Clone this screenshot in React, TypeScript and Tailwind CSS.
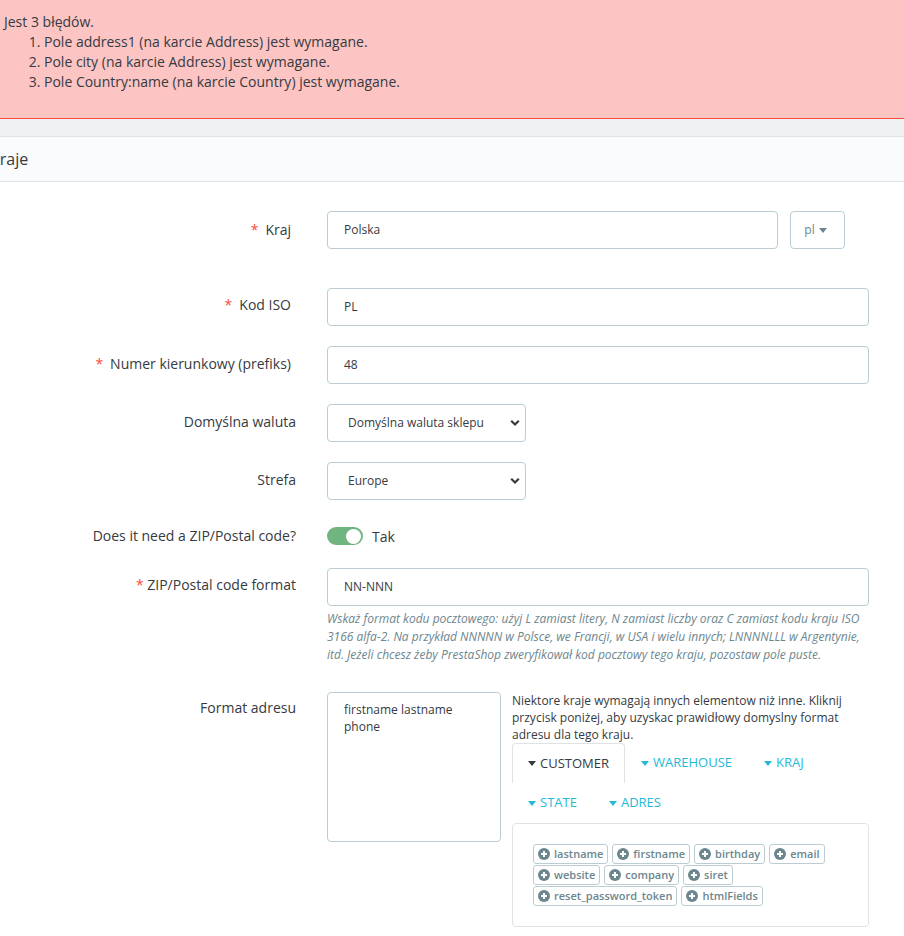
import React from 'react'

const Star = () => <span className="mr-[7px] text-[#f54c3e]">*</span>

type RowProps = {
	label: React.ReactNode
	className?: string
	labelClass?: string
	children: React.ReactNode
}

function Row({ label, className = '', labelClass = 'pt-[9px]', children }: RowProps) {
	return (
		<div className={`flex ${className}`}>
			<div className={`w-[296px] shrink-0 text-right text-[14px] leading-[20px] ${labelClass}`}>{label}</div>
			<div className="ml-[31px] w-[542px]">{children}</div>
		</div>
	)
}

const Caret = ({ color }: { color: string }) => (
	<svg width="8" height="5" viewBox="0 0 8 5" className="mr-[4px] inline-block">
		<path d="M0 0h8L4 5z" fill={color} />
	</svg>
)

const Chevron = () => (
	<svg width="10" height="7" viewBox="0 0 10 7" className="pointer-events-none absolute right-[5px] top-1/2 -translate-y-1/2">
		<path d="M1.2 1.2L5 5l3.8-3.8" stroke="#363a41" strokeWidth="2.2" fill="none" />
	</svg>
)

function Select({ value }: { value: string }) {
	return (
		<div className="relative h-[38px] w-[199px] rounded-[4px] border border-[#bbcdd2] bg-white">
			<div className="flex h-full items-center pl-[20px] text-[12px]">{value}</div>
			<Chevron />
		</div>
	)
}

function Tag({ name }: { name: string }) {
	return (
		<span className="flex h-[20px] items-center gap-[4px] rounded-[3px] border border-[#bbcdd2] bg-white pl-[4px] pr-[4px] text-[11px] font-semibold text-[#6c868e]">
			<svg width="12" height="12" viewBox="0 0 12 12">
				<circle cx="6" cy="6" r="6" fill="#6c868e" />
				<path d="M6 3v6M3 6h6" stroke="#fff" strokeWidth="2" />
			</svg>
			{name}
		</span>
	)
}

const tags = ['lastname', 'firstname', 'birthday', 'email', 'website', 'company', 'siret', 'reset_password_token', 'htmlFields']

export default function App() {
	const input = 'h-[38px] rounded-[4px] border border-[#bbcdd2] bg-white flex items-center pl-[16px] text-[12px]'

	return (
		<div className="min-h-screen overflow-hidden bg-white font-['Open_Sans',sans-serif] text-[#363a41]">
			{/* error alert */}
			<div className="h-[119px] border-b border-[#f54c3e] bg-[#fcc5c3] pl-[4px] pt-[12px] text-[14px] leading-[20px]">
				<div>Jest 3 błędów.</div>
				<ol className="list-decimal pl-[40px]">
					<li>Pole address1 (na karcie Address) jest wymagane.</li>
					<li>Pole city (na karcie Address) jest wymagane.</li>
					<li>Pole Country:name (na karcie Country) jest wymagane.</li>
				</ol>
			</div>
			<div className="h-[17px] bg-[#eff1f2]" />
			<div className="flex h-[46px] items-center border-y border-[#dfe3e6] bg-[#fafbfc] text-[16px]">
				<span className="-ml-[10px]">Kraje</span>
			</div>

			<div className="pt-[29px] pb-[20px]">
				<Row label={<span className="pr-[5px]"><Star />Kraj</span>}>
					<div className="flex gap-[12px]">
						<div className={`${input} w-[451px]`}>Polska</div>
						<div className="flex h-[38px] w-[55px] items-center justify-center rounded-[4px] border border-[#bbcdd2] text-[12px] text-[#6c868e]">
							<span className="mr-[4px]">pl</span>
							<Caret color="#6c868e" />
						</div>
					</div>
				</Row>

				<Row className="mt-[39px]" labelClass="pt-[7px]" label={<span className="pr-[5px]"><Star />Kod ISO</span>}>
					<div className={input}>PL</div>
				</Row>

				<Row className="mt-[20px]" labelClass="pt-[8px]" label={<span className="pr-[5px]"><Star />Numer kierunkowy (prefiks)</span>}>
					<div className={input}>48</div>
				</Row>

				<Row className="mt-[20px]" labelClass="pt-[8px]" label="Domyślna waluta">
					<Select value="Domyślna waluta sklepu" />
				</Row>

				<Row className="mt-[20px]" labelClass="pt-[8px]" label="Strefa">
					<Select value="Europe" />
				</Row>

				<Row className="mt-[20px] h-[32px] items-center" labelClass="" label="Does it need a ZIP/Postal code?">
					<div className="flex items-center">
						<div className="flex h-[18px] w-[36px] items-center justify-end rounded-full bg-[#70b580] pr-[2px]">
							<div className="h-[15px] w-[15px] rounded-full bg-white" />
						</div>
						<span className="ml-[9px] text-[14px]">Tak</span>
					</div>
				</Row>

				<Row className="mt-[16px]" labelClass="pt-[7px]" label={<span><span className="text-[#f54c3e]">*</span> ZIP/Postal code format</span>}>
					<div className={input}>NN-NNN</div>
					<p className="mt-[4px] text-[12px] italic leading-[18px] text-[#6c868e]">
						Wskaż format kodu pocztowego: użyj L zamiast litery, N zamiast liczby oraz C zamiast kodu kraju ISO 3166 alfa-2. Na przykład NNNNN w Polsce, we Francji, w USA i wielu innych; LNNNNLLL w Argentynie, itd. Jeżeli chcesz żeby PrestaShop zweryfikował kod pocztowy tego kraju, pozostaw pole puste.
					</p>
				</Row>

				<Row className="mt-[28px]" labelClass="pt-[6px]" label="Format adresu">
					<div className="flex items-start gap-[11px]">
						<div className="h-[150px] w-[174px] shrink-0 rounded-[4px] border border-[#bbcdd2] pl-[16px] pt-[8px] text-[12px] leading-[17px]">
							firstname lastname
							<br />
							phone
						</div>
						<div className="w-[358px]">
							<p className="text-[12px] leading-[17px]">
								Niektore kraje wymagają innych elementow niż inne. Kliknij przycisk poniżej, aby uzyskac prawidłowy domyslny format adresu dla tego kraju.
							</p>
							<div className="flex flex-wrap text-[13px] uppercase">
								<div className="flex h-[40px] items-center rounded-t-[4px] border border-b-0 border-[#dfe3e6] bg-white px-[15px] text-[#363a41]">
									<Caret color="#363a41" />
									Customer
								</div>
								{['Warehouse', 'Kraj', 'State', 'Adres'].map((t) => (
									<div key={t} className="flex h-[40px] items-center px-[16px] text-[#25b9d7]">
										<Caret color="#25b9d7" />
										{t}
									</div>
								))}
							</div>
							<div className="h-[104px] rounded-[4px] border border-[#dfe3e6] p-[20px]">
								<div className="flex flex-wrap gap-x-[4px] gap-y-[1px]">
									{tags.map((t) => (
										<Tag key={t} name={t} />
									))}
								</div>
							</div>
						</div>
					</div>
				</Row>
			</div>
		</div>
	)
}
